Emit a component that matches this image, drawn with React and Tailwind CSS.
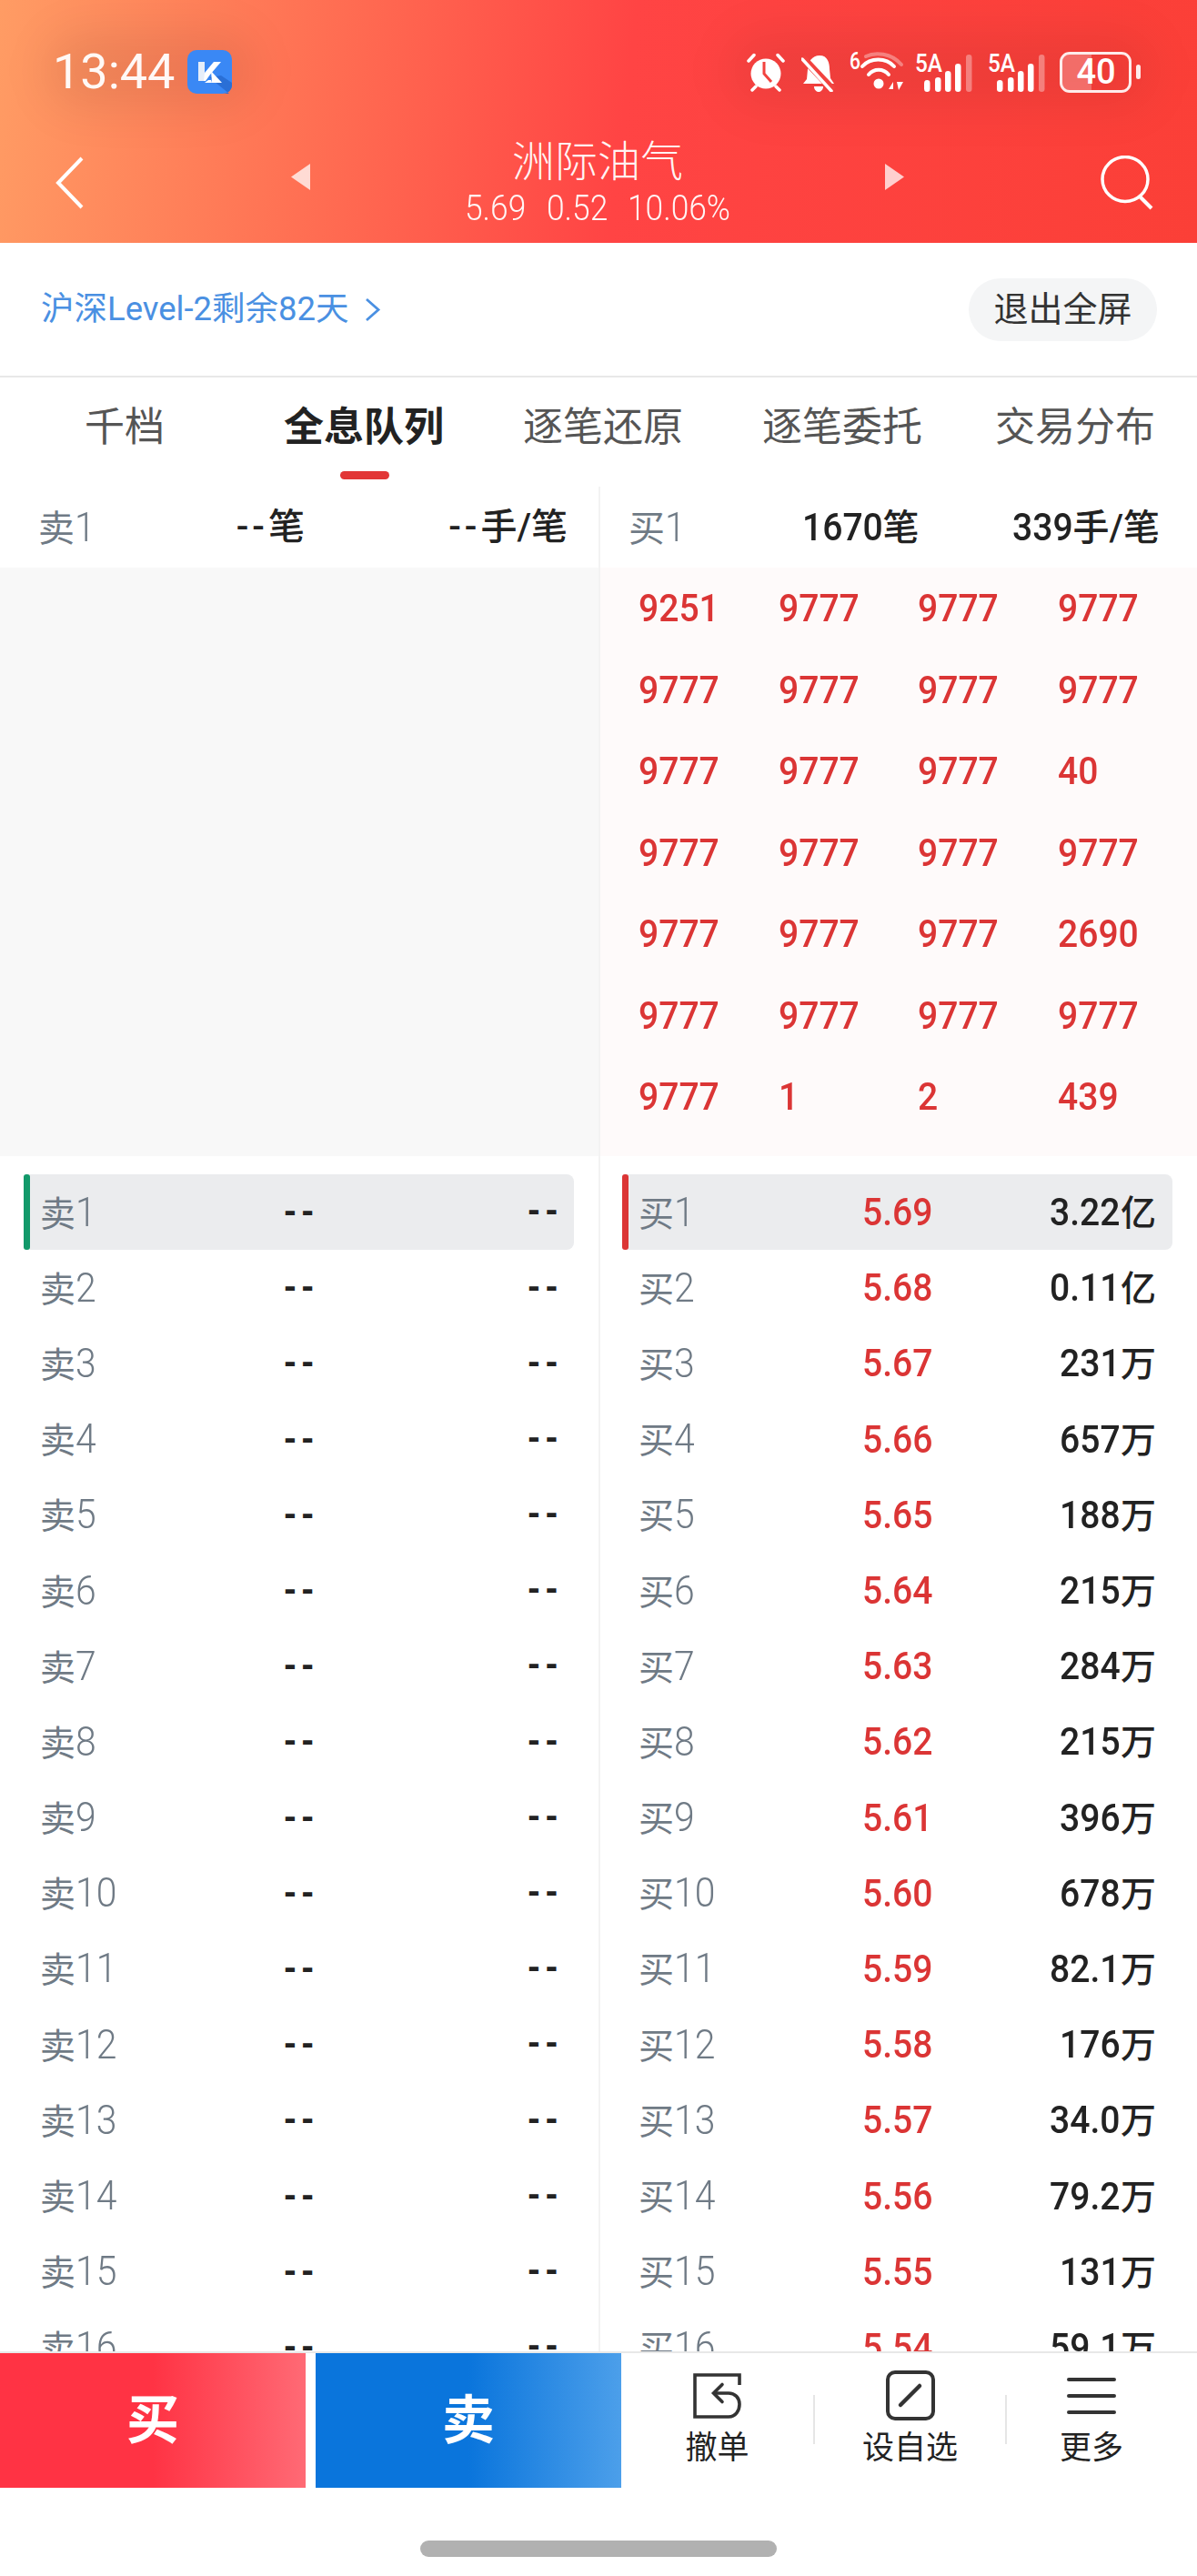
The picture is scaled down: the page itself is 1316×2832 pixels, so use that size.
import React from "react";

const DIG = { ".": 0.263, "%": 0.732, "/": 0.41 };
const adv = (s) => [...s].reduce((a, c) => a + (DIG[c] ?? 0.5615), 0);

function Mix({ text, size = 42, sx = 0.93, dcls = "text-[42px]" }) {
  const parts = text.split(/([0-9.%]+)/).filter(Boolean);
  return (
    <>
      {parts.map((p, i) =>
        /^[0-9.%]+$/.test(p) ? (
          <span
            key={i}
            className={`inline-block origin-left scale-x-[0.93] ${dcls}`}
            style={{ marginRight: -(1 - sx) * adv(p) * size }}
          >
            {p}
          </span>
        ) : (
          <span key={i}>{p}</span>
        )
      )}
    </>
  );
}

const queue = [
  ["9251", "9777", "9777", "9777"],
  ["9777", "9777", "9777", "9777"],
  ["9777", "9777", "9777", "40"],
  ["9777", "9777", "9777", "9777"],
  ["9777", "9777", "9777", "2690"],
  ["9777", "9777", "9777", "9777"],
  ["9777", "1", "2", "439"],
];

const buys = [
  ["5.69", "3.22亿"],
  ["5.68", "0.11亿"],
  ["5.67", "231万"],
  ["5.66", "657万"],
  ["5.65", "188万"],
  ["5.64", "215万"],
  ["5.63", "284万"],
  ["5.62", "215万"],
  ["5.61", "396万"],
  ["5.60", "678万"],
  ["5.59", "82.1万"],
  ["5.58", "176万"],
  ["5.57", "34.0万"],
  ["5.56", "79.2万"],
  ["5.55", "131万"],
  ["5.54", "59.1万"],
];

function Dash() {
  return (
    <span className="font-['Liberation_Sans'] font-bold text-[40px] leading-none tracking-[6px] text-[#222] mr-[-6px] relative -top-[2px]">
      --
    </span>
  );
}

function Row({ index, side, active, price, value }) {
  const isBuy = side === "买";
  return (
    <div className={`relative grid grid-cols-3 items-center h-[83.2px] w-[605px] px-[18px] ${active ? "bg-[#ebecee] rounded-[8px]" : ""}`}>
      {active && <div className={`absolute left-0 top-0 bottom-0 w-[7px] rounded-[3px] ${isBuy ? "bg-[#db3535]" : "bg-[#12996a]"}`} />}
      <div className="text-[39px] text-[#6f7a85] whitespace-nowrap">
        <Mix text={`${side}${index}`} size={44} dcls="text-[44px] font-light" />
      </div>
      <div className="text-center whitespace-nowrap font-medium text-[#db3535]">
        {price ? <Mix text={price} /> : <Dash />}
      </div>
      <div className="text-right whitespace-nowrap text-[39px] font-medium text-[#222]">
        {value ? <Mix text={value} /> : <Dash />}
      </div>
    </div>
  );
}

function Alarm() {
  return (
    <svg width="44" height="43" viewBox="0 0 44 43" fill="none">
      <circle cx="22" cy="23" r="16.5" fill="#fff" />
      <path d="M3 9 L9 2.5 M41 9 L35 2.5 M7 41 L11 37 M37 41 L33 37" stroke="#fff" strokeWidth="3.5" strokeLinecap="round" />
      <path d="M20 10 V23 L28 32" stroke="#f2433f" strokeWidth="3" fill="none" />
    </svg>
  );
}

function BellOff() {
  return (
    <svg width="38" height="43" viewBox="0 0 38 43" fill="none">
      <path d="M20 3 C29 3 31 11 31 18 L32 28 L36 34 H2 L6 29 L7 18 C7 10 12 3 20 3 Z" fill="#fff" />
      <path d="M14 37 H24 C24 41 21 43 19 43 C17 43 14 41 14 37 Z" fill="#fff" />
      <path d="M1 5 L35 41" stroke="#f2433f" strokeWidth="8" />
      <path d="M1 7 L33 42" stroke="#fff" strokeWidth="3.5" strokeLinecap="round" />
    </svg>
  );
}

function Wifi() {
  return (
    <svg width="60" height="46" viewBox="0 0 60 46" fill="none" className="overflow-visible">
      <text x="0" y="20" fill="#fff" fontSize="26" fontWeight="500" fontFamily="Roboto" textLength="12" lengthAdjust="spacingAndGlyphs">6</text>
      <path d="M18 6 C28 1 46 2 57 15" stroke="#fff" strokeOpacity="0.35" strokeWidth="4" strokeLinecap="round" />
      <path d="M14 17 C23 7 40 7 49 17" stroke="#fff" strokeWidth="4" strokeLinecap="round" />
      <path d="M21 26 C27 19 37 19 43 26" stroke="#fff" strokeWidth="4" strokeLinecap="round" />
      <circle cx="32" cy="36" r="5.5" fill="#fff" />
      <path d="M43 42 L48 34 V42 Z M52 34 H59 L54 43 Z" fill="#fff" />
    </svg>
  );
}

function Signal() {
  const bars = [
    [10, 13, 1],
    [22, 16, 1],
    [33, 23, 1],
    [44, 31, 1],
    [56, 41, 0.35],
  ];
  return (
    <svg width="62" height="43" viewBox="0 0 62 43" fill="none" className="overflow-visible">
      <text x="0" y="21" fill="#fff" fontSize="28" fontWeight="500" fontFamily="Roboto" textLength="30" lengthAdjust="spacingAndGlyphs">5A</text>
      {bars.map(([x, h, o]) => (
        <rect key={x} x={x} y={43 - h} width="6.5" height={h} rx="3.2" fill="#fff" fillOpacity={o} />
      ))}
    </svg>
  );
}

function KLogo() {
  return (
    <svg width="49" height="48" viewBox="0 0 49 48">
      <rect width="49" height="48" rx="10" fill="#3a88f5" />
      <path d="M24 30 L46 48 H39 C44 48 49 44 49 39 V36 L37 28 Z" fill="#2a6fd6" />
      <path d="M12 13 H19 V34 H12 Z" fill="#e6eef9" />
      <path d="M19 25 L29 13 H37 L25 27 L20 34 H18 Z" fill="#fff" />
      <path d="M26 23 L38 36 H19 L23 33 H26 L27 36 Z" fill="#fff" />
    </svg>
  );
}

export default function App() {
  return (
    <div className="relative w-[1316px] h-[2832px] flex flex-col overflow-hidden bg-white font-[Roboto,'Noto_Sans_CJK_SC',sans-serif]">
      {/* header */}
      <header className="relative h-[267px] shrink-0 bg-[linear-gradient(97deg,#ff9c64_0%,#ff7254_25%,#ff4444_52%,#fb3f37_100%)] text-white">
        <div className="absolute left-[50px] top-[35px] w-[230px] h-[85px] rounded-full bg-black/[.07] blur-xl" />
        <div className="absolute left-[800px] top-[35px] w-[470px] h-[85px] rounded-full bg-black/[.06] blur-xl" />
        <div className="relative flex items-center h-[48px] mt-[55px] pl-[58px]">
          <span className="text-[54px] leading-none text-white/95">13:44</span>
          <span className="ml-[14px] flex"><KLogo /></span>
          <span className="ml-[565px] flex"><Alarm /></span>
          <span className="ml-[17px] flex"><BellOff /></span>
          <span className="ml-[15px] flex"><Wifi /></span>
          <span className="ml-[12px] flex"><Signal /></span>
          <span className="ml-[18px] flex"><Signal /></span>
          <span className="ml-[17px] relative flex items-center justify-center w-[79px] h-[45px] rounded-[11px] border-[3px] border-white/90 overflow-hidden">
            <span className="absolute left-0 top-0 bottom-0 w-[32px] bg-white/25" />
            <span className="relative text-[38px] font-medium leading-none">40</span>
          </span>
          <span className="ml-[5px] w-[5px] h-[16px] rounded-full bg-white/90" />
        </div>
        <div className="relative flex items-center h-[92px] mt-[52px] pl-[61px] pr-[48px]">
          <svg width="31" height="58" viewBox="0 0 31 58" fill="none" className="shrink-0">
            <path d="M29 2 L3 29 L29 56" stroke="#fff" strokeWidth="4" />
          </svg>
          <svg width="21" height="29" viewBox="0 0 21 29" className="ml-[228px] -mt-[13px] shrink-0">
            <path d="M21 0 V29 L0 14.5 Z" fill="#fff" fillOpacity="0.75" />
          </svg>
          <div className="flex-1 flex flex-col items-center pt-[10px]">
            <div className="text-[47px] leading-[46px] font-light text-white/95">洲际油气</div>
            <div className="flex gap-[22px] text-[38px] leading-[56px] font-light text-white/95">
              <span><Mix text="5.69" size={38} dcls="text-[38px]" /></span>
              <span><Mix text="0.52" size={38} dcls="text-[38px]" /></span>
              <span><Mix text="10.06%" size={38} dcls="text-[38px]" /></span>
            </div>
          </div>
          <svg width="21" height="29" viewBox="0 0 21 29" className="-mt-[13px] shrink-0">
            <path d="M0 0 V29 L21 14.5 Z" fill="#fff" fillOpacity="0.75" />
          </svg>
          <svg width="58" height="60" viewBox="0 0 58 60" fill="none" className="ml-[216px] shrink-0">
            <ellipse cx="27" cy="26" rx="25" ry="24.5" stroke="#fff" strokeWidth="3.5" />
            <path d="M43 45 L56 58" stroke="#fff" strokeWidth="4" />
          </svg>
        </div>
      </header>

      {/* level-2 banner */}
      <div className="h-[148px] shrink-0 flex items-center pl-[45px] pr-[44px] border-b-2 border-[#e8e8e8]">
        <span className="text-[36.5px] text-[#4a90e2] whitespace-nowrap">沪深Level-2剩余82天</span>
        <svg width="18" height="27" viewBox="0 0 18 27" fill="none" className="ml-[17px]">
          <path d="M2 2 L15 13.5 L2 25" stroke="#4a90e2" strokeWidth="2.8" />
        </svg>
        <button className="ml-auto h-[69px] w-[207px] rounded-full bg-[#f4f5f6] text-[38px] text-[#333]">退出全屏</button>
      </div>

      {/* tabs */}
      <div className="relative h-[120px] shrink-0 flex items-start text-[44px] text-[#555] leading-[111px]">
        <div className="w-[274px] text-center">千档</div>
        <div className="w-[252px] text-center font-bold text-[#222] relative">
          全息队列
          <span className="absolute left-[100px] top-[103px] w-[54px] h-[9px] rounded-full bg-[#e23636]" />
        </div>
        <div className="w-[274px] text-center">逐笔还原</div>
        <div className="w-[252px] text-center">逐笔委托</div>
        <div className="w-[260px] text-center">交易分布</div>
      </div>

      {/* main */}
      <div className="flex flex-1 min-h-0 overflow-hidden">
        <section className="w-[660px] shrink-0 border-r-2 border-[#f3f3f3] flex flex-col">
          <div className="h-[89px] shrink-0 flex items-center pl-[42px] pr-[34px] whitespace-nowrap text-[40px]">
            <span className="text-[#6f7a85]"><Mix text="卖1" size={44} dcls="text-[44px] font-light" /></span>
            <span className="ml-[155px] font-medium text-[#222]"><span className="tracking-[4px]">--</span>笔</span>
            <span className="ml-auto font-medium text-[#222]"><span className="tracking-[4px]">--</span>手/笔</span>
          </div>
          <div className="h-[647px] shrink-0 bg-[#f8f8f8]" />
          <div className="pt-[20px] pl-[26px]">
            {Array.from({ length: 16 }, (_, i) => (
              <Row key={i} index={i + 1} side="卖" active={i === 0} />
            ))}
          </div>
        </section>
        <section className="flex-1 flex flex-col min-w-0">
          <div className="h-[89px] shrink-0 flex items-center pl-[31px] pr-[41px] whitespace-nowrap text-[40px]">
            <span className="text-[#6f7a85]"><Mix text="买1" size={44} dcls="text-[44px] font-light" /></span>
            <span className="ml-[128px] font-medium text-[#222]"><Mix text="1670笔" /></span>
            <span className="ml-auto font-medium text-[#222]"><Mix text="339手/笔" /></span>
          </div>
          <div className="h-[647px] shrink-0 bg-[#fefafa] pl-[42px] grid grid-cols-[repeat(4,153.5px)] auto-rows-[89.5px] items-center font-medium text-[#db3535]">
            {queue.flat().map((q, i) => (
              <div key={i}><Mix text={q} /></div>
            ))}
          </div>
          <div className="pt-[20px] pl-[24px]">
            {buys.map(([p, v], i) => (
              <Row key={i} index={i + 1} side="买" active={i === 0} price={p} value={v} />
            ))}
          </div>
        </section>
      </div>

      {/* bottom */}
      <footer className="relative h-[247px] shrink-0 bg-white border-t-2 border-[#e8e8e8]">
        <div className="flex h-[148px]">
          <button className="w-[336px] bg-[linear-gradient(90deg,#ff3344_0%,#ff3344_50%,#ff6a75_100%)] text-white text-[58px] font-bold">买</button>
          <button className="ml-[11px] w-[336px] bg-[linear-gradient(90deg,#0a75dc_0%,#0a75dc_50%,#4c9fea_100%)] text-white text-[58px] font-bold">卖</button>
          <div className="flex-1 flex text-[35px] text-[#222]">
            <div className="w-[211px] flex flex-col items-center pt-[22px]">
              <svg width="54" height="50" viewBox="0 0 54 50" fill="none" stroke="#333" strokeWidth="3.6">
                <path d="M51 13 V2 H2 V48 H39 C47 48 51 41 51 34 C51 27 46 22 39 22 H23" />
                <path d="M32 12.5 L22.5 22 L32 31.5" strokeLinecap="round" />
              </svg>
              <span className="mt-[11px] leading-[44px]">撤单</span>
            </div>
            <div className="w-[2px] h-[54px] mt-[46px] bg-[#e6e6e6] shrink-0" />
            <div className="w-[209px] flex flex-col items-center pt-[19px]">
              <svg width="54" height="55" viewBox="0 0 54 55" fill="none" stroke="#333">
                <rect x="2" y="2" width="50" height="51" rx="8" strokeWidth="4" />
                <path d="M16 38 L37 17" strokeWidth="4.5" strokeLinecap="round" />
              </svg>
              <span className="mt-[9px] leading-[44px]">设自选</span>
            </div>
            <div className="w-[2px] h-[54px] mt-[46px] bg-[#e6e6e6] shrink-0" />
            <div className="w-[186px] flex flex-col items-center pt-[26px]">
              <svg width="54" height="42" viewBox="0 0 54 42" fill="none" stroke="#333" strokeWidth="4" strokeLinecap="round">
                <path d="M2 3 H52 M2 21 H52 M2 39 H52" />
              </svg>
              <span className="mt-[15px] leading-[44px]">更多</span>
            </div>
          </div>
        </div>
        <div className="mt-[58px] mx-auto w-[392px] h-[18px] rounded-full bg-[#b1b1b1]" />
      </footer>
    </div>
  );
}
